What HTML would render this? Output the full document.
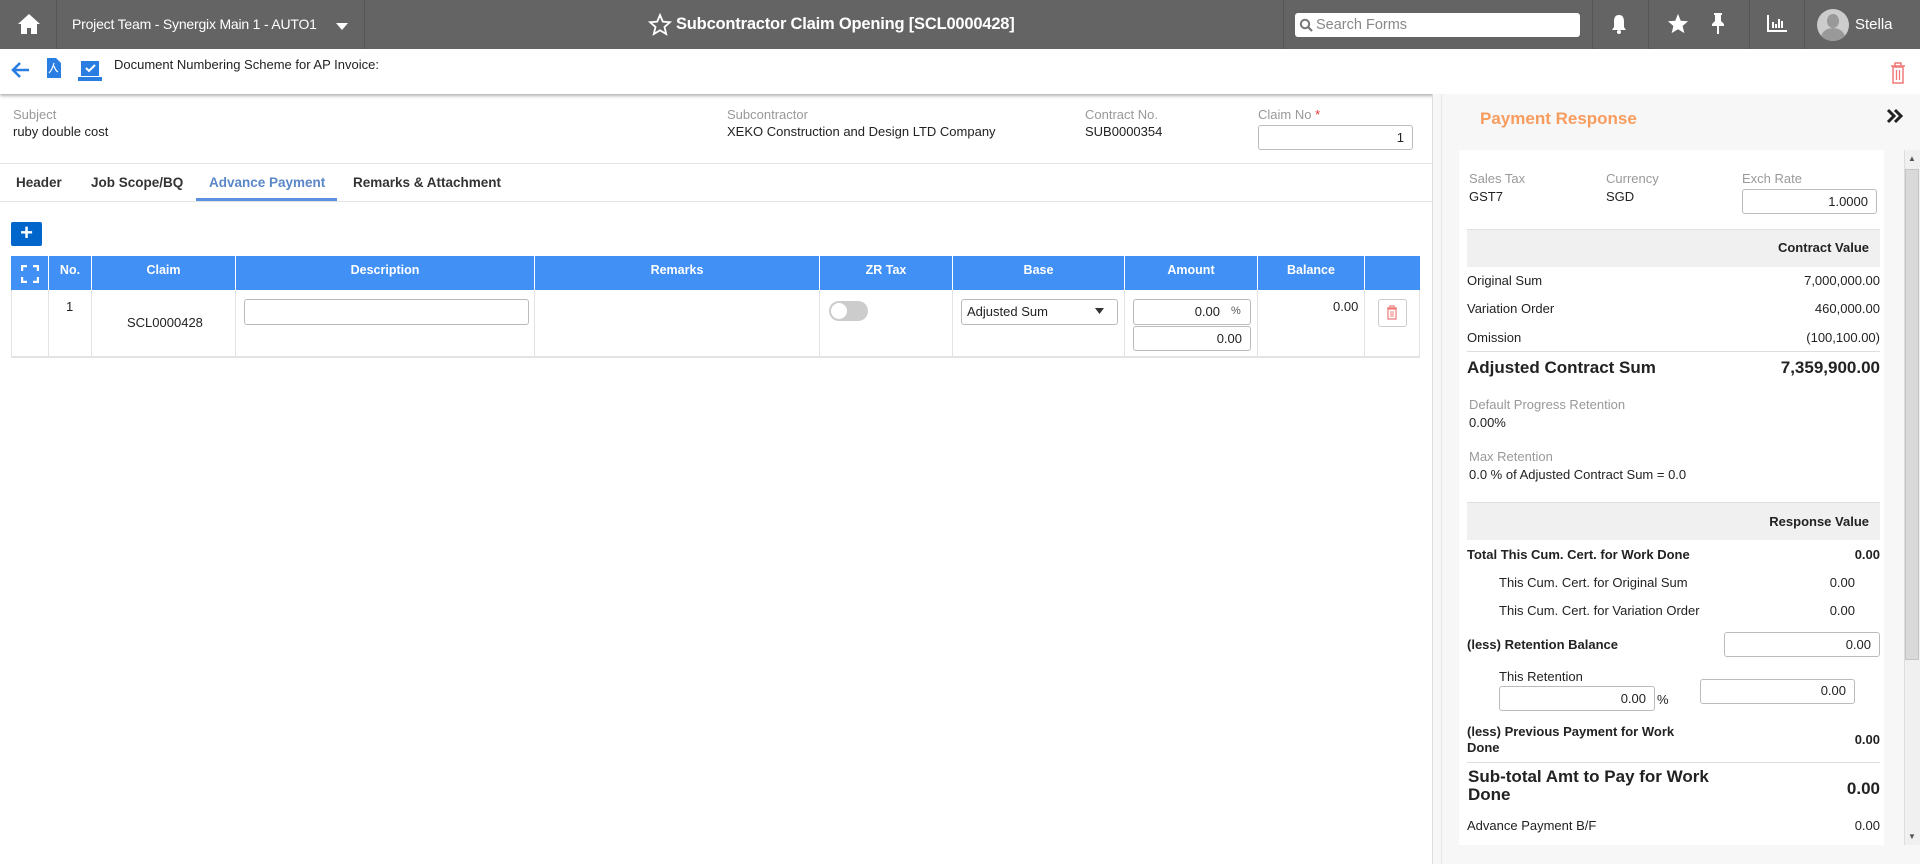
<!DOCTYPE html>
<html><head><meta charset="utf-8"><style>
*{box-sizing:border-box;margin:0;padding:0}
body{width:1920px;height:864px;overflow:hidden;background:#fff;font-family:"Liberation Sans",sans-serif;font-size:13px;color:#222;position:relative}
.a{position:absolute;white-space:nowrap}
.top{position:absolute;left:0;top:0;width:1920px;height:49px;background:#646464}
.vd{position:absolute;top:0;width:1px;height:49px;background:#555}
.w{color:#fff}
.lbl{color:#999}
.inp{position:absolute;border:1px solid #bbb;border-radius:3px;background:#fff;text-align:right;padding-right:8px;font-size:13px}
.th{position:absolute;top:256px;height:34px;background:#4190f5;color:#fff;font-weight:bold;font-size:12.5px;text-align:center;line-height:28px;border-right:1px solid #fff}
.td{position:absolute;top:290px;height:68px;border-right:1px solid #e3e3e3}
.r{text-align:right}
</style></head><body>
<div class="top"></div>
<div class="vd" style="left:56px"></div><div class="vd" style="left:364px"></div>
<div class="vd" style="left:1283px"></div><div class="vd" style="left:1592px"></div><div class="vd" style="left:1648px"></div><div class="vd" style="left:1749px"></div><div class="vd" style="left:1804px"></div>
<svg class="a" style="left:17px;top:13px" width="24" height="22" viewBox="0 0 24 22"><path d="M12 1 L1 11 h3 v10 h6 v-6 h4 v6 h6 V11 h3 z" fill="#fff"/></svg>
<div class="a w" style="left:72px;top:16px;font-size:14px;letter-spacing:-0.2px">Project Team - Synergix Main 1 - AUTO1</div>
<svg class="a" style="left:335px;top:22px" width="14" height="9"><path d="M1 1h12L7 8z" fill="#fff"/></svg>
<svg class="a" style="left:648px;top:13px" width="24" height="23" viewBox="0 0 24 23"><path d="M12 2 L14.8 8.6 L22 9.2 L16.5 14 L18.2 21 L12 17.3 L5.8 21 L7.5 14 L2 9.2 L9.2 8.6 Z" fill="none" stroke="#fff" stroke-width="1.8"/></svg>
<div class="a w" style="left:676px;top:15px;font-size:16.5px;font-weight:bold;letter-spacing:-0.2px">Subcontractor Claim Opening [SCL0000428]</div>
<div class="a" style="left:1295px;top:13px;width:285px;height:24px;background:#fff;border-radius:3px"></div>
<svg class="a" style="left:1299px;top:18px" width="14" height="14"><circle cx="6" cy="6" r="4.2" fill="none" stroke="#777" stroke-width="2"/><path d="M9 9l4 4" stroke="#777" stroke-width="2.2"/></svg>
<div class="a" style="left:1316px;top:17px;font-size:14.5px;color:#888">Search Forms</div>
<svg class="a" style="left:1610px;top:13px" width="18" height="22"><path d="M9 2c-4 0-5 3-5 7v5l-2 3h14l-2-3V9c0-4-1-7-5-7z" fill="#fff"/><circle cx="9" cy="19" r="2" fill="#fff"/></svg>
<svg class="a" style="left:1667px;top:13px" width="22" height="21" viewBox="0 0 24 23"><path d="M12 1 L15 8.5 L23 9 L17 14.2 L19 22 L12 17.8 L5 22 L7 14.2 L1 9 L9 8.5 Z" fill="#fff"/></svg>
<svg class="a" style="left:1710px;top:12px" width="16" height="23"><path d="M4 1h8v2h-1v6l3 3v2H9v8H7v-8H2v-2l3-3V3H4z" fill="#fff"/></svg>
<svg class="a" style="left:1766px;top:13px" width="22" height="20"><path d="M2 2v16h19" stroke="#fff" stroke-width="2" fill="none"/><path d="M7 9v6M10 11v4M13 6v9M16 8v7" stroke="#fff" stroke-width="2"/></svg>
<div class="a" style="left:1817px;top:9px;width:32px;height:32px;border-radius:50%;background:#ccc;overflow:hidden"><div style="position:absolute;left:10px;top:5px;width:12px;height:14px;border-radius:50%;background:#999"></div><div style="position:absolute;left:4px;top:19px;width:24px;height:20px;border-radius:50%;background:#999"></div></div>
<div class="a w" style="left:1855px;top:16px;font-size:15px">Stella</div>
<!-- toolbar -->
<div class="a" style="left:0;top:49px;width:1920px;height:45px;background:#fff;box-shadow:0 2px 3px rgba(0,0,0,.3)"></div>
<svg class="a" style="left:11px;top:61px" width="20" height="18"><path d="M18 9H3M9 2L2 9l7 7" stroke="#2a7de1" stroke-width="2.6" fill="none"/></svg>
<svg class="a" style="left:47px;top:58px" width="14" height="20"><path d="M0 0h9l5 5v15H0z" fill="#2a7de1"/><path d="M7 5c-1 4-3 8-5 10M7 8c1 3 2 5 4 6" stroke="#fff" stroke-width="1.2" fill="none"/></svg>
<svg class="a" style="left:77px;top:61px" width="26" height="21"><rect x="4" y="0" width="18" height="15" fill="#2a7de1"/><path d="M9 7l3 3 6-6" stroke="#fff" stroke-width="2" fill="none"/><rect x="1" y="16" width="24" height="4" fill="#2a7de1"/></svg>
<div class="a" style="left:114px;top:57px;font-size:13px">Document Numbering Scheme for AP Invoice:</div>
<svg class="a" style="left:1890px;top:62px" width="16" height="22"><path d="M1 4h14M5 4V1h6v3M3 5h10v16H3z" stroke="#f07a7a" stroke-width="1.5" fill="none"/><path d="M6.5 8v10M9.5 8v10" stroke="#f07a7a" stroke-width="1.3"/></svg>
<!-- form -->
<div class="a lbl" style="left:13px;top:107px">Subject</div>
<div class="a" style="left:13px;top:124px">ruby double cost</div>
<div class="a lbl" style="left:727px;top:107px">Subcontractor</div>
<div class="a" style="left:727px;top:124px">XEKO Construction and Design LTD Company</div>
<div class="a lbl" style="left:1085px;top:107px">Contract No.</div>
<div class="a" style="left:1085px;top:124px">SUB0000354</div>
<div class="a lbl" style="left:1258px;top:107px">Claim No <span style="color:#e33">*</span></div>
<div class="inp" style="left:1258px;top:125px;width:155px;height:25px;line-height:23px">1</div>
<div class="a" style="left:0;top:163px;width:1432px;height:1px;background:#e3e3e3"></div>
<div class="a" style="left:16px;top:175px;font-size:13.5px;font-weight:bold;color:#333">Header</div>
<div class="a" style="left:91px;top:175px;font-size:13.5px;font-weight:bold;color:#333">Job Scope/BQ</div>
<div class="a" style="left:209px;top:175px;font-size:13.5px;font-weight:bold;color:#5b87c8">Advance Payment</div>
<div class="a" style="left:353px;top:175px;font-size:13.5px;font-weight:bold;color:#333">Remarks &amp; Attachment</div>
<div class="a" style="left:0;top:201px;width:1432px;height:1px;background:#e3e3e3"></div>
<div class="a" style="left:196px;top:198px;width:141px;height:3px;background:#5b8fe0"></div>
<div class="a" style="left:11px;top:222px;width:31px;height:24px;background:#0066cc;border-radius:2px;color:#fff;font-size:22px;line-height:22px;text-align:center;font-weight:bold">+</div>
<!-- table -->
<div class="th" style="left:11px;width:38px"></div>
<svg class="a" style="left:21px;top:265px" width="18" height="18"><path d="M1 6V1h5M12 1h5v5M17 12v5h-5M6 17H1v-5" stroke="#fff" stroke-width="2.4" fill="none"/></svg>
<div class="th" style="left:49px;width:43px">No.</div>
<div class="th" style="left:92px;width:144px">Claim</div>
<div class="th" style="left:236px;width:299px">Description</div>
<div class="th" style="left:535px;width:285px">Remarks</div>
<div class="th" style="left:820px;width:133px">ZR Tax</div>
<div class="th" style="left:953px;width:172px">Base</div>
<div class="th" style="left:1125px;width:133px">Amount</div>
<div class="th" style="left:1258px;width:107px">Balance</div>
<div class="th" style="left:1365px;width:55px;border-right:0"></div>
<div class="a" style="left:11px;top:290px;width:1409px;height:68px;border-left:1px solid #e3e3e3;border-right:1px solid #e3e3e3;border-bottom:2px solid #e3e3e3"></div>
<div class="td" style="left:11px;width:38px"></div><div class="td" style="left:49px;width:43px"></div><div class="td" style="left:92px;width:144px"></div><div class="td" style="left:236px;width:299px"></div><div class="td" style="left:535px;width:285px"></div><div class="td" style="left:820px;width:133px"></div><div class="td" style="left:953px;width:172px"></div><div class="td" style="left:1125px;width:133px"></div><div class="td" style="left:1258px;width:107px"></div>
<div class="a" style="left:66px;top:299px">1</div>
<div class="a" style="left:127px;top:315px">SCL0000428</div>
<div class="inp" style="left:244px;top:299px;width:285px;height:26px"></div>
<div class="a" style="left:829px;top:301px;width:39px;height:20px;border-radius:10px;background:#ccc"><div style="position:absolute;left:2px;top:2px;width:16px;height:16px;border-radius:50%;background:#fff"></div></div>
<div class="inp" style="left:961px;top:299px;width:157px;height:26px;text-align:left;padding-left:5px;line-height:24px">Adjusted Sum</div>
<svg class="a" style="left:1095px;top:308px" width="9" height="6"><path d="M0 0h9L4.5 6z" fill="#333"/></svg>
<div class="inp" style="left:1133px;top:299px;width:118px;height:26px;line-height:24px;padding-right:30px">0.00</div>
<div class="a" style="left:1231px;top:305px;font-size:11px;color:#555">%</div>
<div class="inp" style="left:1133px;top:326px;width:118px;height:25px;line-height:23px">0.00</div>
<div class="a" style="left:1333px;top:299px">0.00</div>
<div class="a" style="left:1378px;top:299px;width:29px;height:28px;border:1px solid #ccc;border-radius:3px"></div>
<svg class="a" style="left:1386px;top:305px" width="12" height="15"><path d="M1 3h10M4 3V1h4v2M2 4h8v10H2z" stroke="#f07a7a" stroke-width="1.2" fill="none"/><path d="M5 6v6M7 6v6" stroke="#f07a7a"/></svg>
<!-- right panel -->
<div class="a" style="left:1432px;top:94px;width:488px;height:770px;background:#f7f7f7;border-left:1px solid #ddd"></div>
<div class="a" style="left:1441px;top:94px;width:1px;height:770px;background:#e6e6e6"></div>
<div class="a" style="left:1480px;top:109px;font-size:17px;font-weight:bold;color:#f89c5e">Payment Response</div>
<svg class="a" style="left:1886px;top:108px" width="18" height="16"><path d="M2 2l6 6-6 6M9 2l6 6-6 6" stroke="#222" stroke-width="3" fill="none"/></svg>
<div class="a" style="left:1459px;top:150px;width:425px;height:695px;background:#fff"></div>
<div class="a" style="left:1904px;top:150px;width:16px;height:695px;background:#f0f0f0;border-left:1px solid #ddd"></div>
<div class="a" style="left:1905px;top:169px;width:14px;height:491px;background:#d9d9d9;border:1px solid #c4c4c4"></div>
<div class="a" style="font-size:8px;left:1908px;top:154px;color:#555">▲</div>
<div class="a" style="font-size:8px;left:1908px;top:832px;color:#555">▼</div>
<div class="a lbl" style="left:1469px;top:171px">Sales Tax</div><div class="a" style="left:1469px;top:189px">GST7</div>
<div class="a lbl" style="left:1606px;top:171px">Currency</div><div class="a" style="left:1606px;top:189px">SGD</div>
<div class="a lbl" style="left:1742px;top:171px">Exch Rate</div>
<div class="inp" style="left:1742px;top:189px;width:135px;height:25px;line-height:23px">1.0000</div>
<div class="a" style="left:1467px;top:229px;width:413px;height:38px;background:#f0f0f0;border-top:1px solid #e0e0e0"></div>
<div class="a" style="left:1467px;top:240px;width:402px;text-align:right;font-weight:bold">Contract Value</div>
<div class="a" style="left:1467px;top:273px">Original Sum</div><div class="a r" style="left:1700px;width:180px;top:273px">7,000,000.00</div>
<div class="a" style="left:1467px;top:301px">Variation Order</div><div class="a r" style="left:1700px;width:180px;top:301px">460,000.00</div>
<div class="a" style="left:1467px;top:330px">Omission</div><div class="a r" style="left:1700px;width:180px;top:330px">(100,100.00)</div>
<div class="a" style="left:1467px;top:351px;width:413px;height:1px;background:#ddd"></div>
<div class="a" style="left:1467px;top:358px;font-size:17px;font-weight:bold">Adjusted Contract Sum</div><div class="a r" style="left:1700px;width:180px;top:358px;font-size:17px;font-weight:bold">7,359,900.00</div>
<div class="a lbl" style="left:1469px;top:397px">Default Progress Retention</div><div class="a" style="left:1469px;top:415px">0.00%</div>
<div class="a lbl" style="left:1469px;top:449px">Max Retention</div><div class="a" style="left:1469px;top:467px">0.0 % of Adjusted Contract Sum = 0.0</div>
<div class="a" style="left:1467px;top:502px;width:413px;height:38px;background:#f0f0f0;border-top:1px solid #e0e0e0"></div>
<div class="a" style="left:1467px;top:514px;width:402px;text-align:right;font-weight:bold">Response Value</div>
<div class="a" style="left:1467px;top:547px;font-weight:bold">Total This Cum. Cert. for Work Done</div><div class="a r" style="left:1700px;width:180px;top:547px;font-weight:bold">0.00</div>
<div class="a" style="left:1499px;top:575px">This Cum. Cert. for Original Sum</div><div class="a r" style="left:1700px;width:155px;top:575px">0.00</div>
<div class="a" style="left:1499px;top:603px">This Cum. Cert. for Variation Order</div><div class="a r" style="left:1700px;width:155px;top:603px">0.00</div>
<div class="a" style="left:1467px;top:637px;font-weight:bold">(less) Retention Balance</div>
<div class="inp" style="left:1724px;top:632px;width:156px;height:25px;line-height:23px">0.00</div>
<div class="a" style="left:1499px;top:669px">This Retention</div>
<div class="inp" style="left:1499px;top:686px;width:156px;height:25px;line-height:23px">0.00</div><div class="a" style="left:1657px;top:692px">%</div>
<div class="inp" style="left:1700px;top:679px;width:155px;height:25px;line-height:21px">0.00</div>
<div class="a" style="left:1467px;top:724px;font-weight:bold;line-height:16px">(less) Previous Payment for Work<br>Done</div><div class="a r" style="left:1700px;width:180px;top:732px;font-weight:bold">0.00</div>
<div class="a" style="left:1467px;top:762px;width:413px;height:1px;background:#ddd"></div>
<div class="a" style="left:1468px;top:768px;font-size:17px;font-weight:bold;line-height:18px">Sub-total Amt to Pay for Work<br>Done</div><div class="a r" style="left:1700px;width:180px;top:779px;font-size:17px;font-weight:bold">0.00</div>
<div class="a" style="left:1467px;top:818px">Advance Payment B/F</div><div class="a r" style="left:1700px;width:180px;top:818px">0.00</div>
</body></html>
